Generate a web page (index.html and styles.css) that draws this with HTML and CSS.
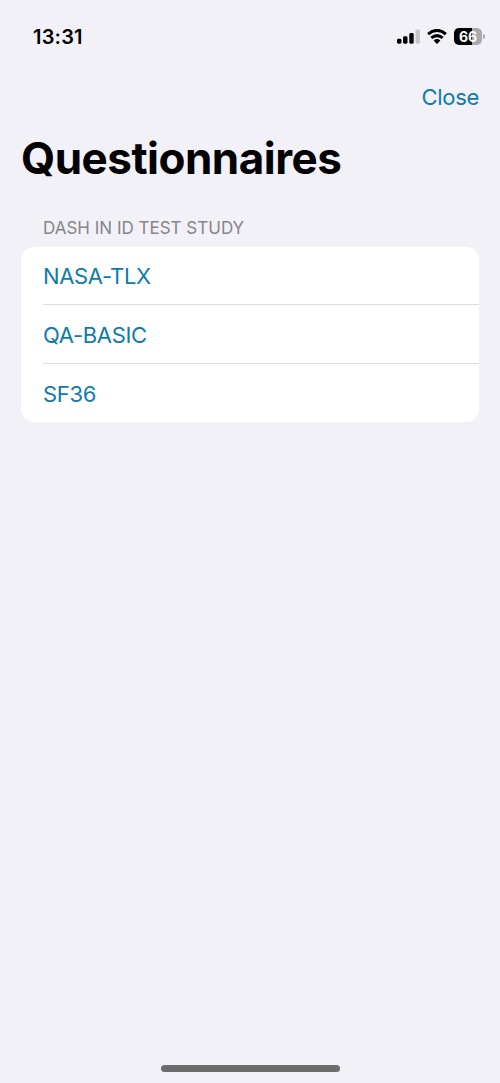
FILE: index.html
```html
<!DOCTYPE html>
<html lang="en">
<head>
<meta charset="utf-8">
<title>Questionnaires</title>
<link rel="stylesheet" href="styles.css">
</head>
<body>
<div class="screen">
  <header class="status">
    <span class="time">13:31</span>
    <div class="indicators">
      <svg class="signal" width="24" height="15" viewBox="0 0 24 15">
        <rect x="0" y="9.8" width="4.4" height="4.9" rx="1.4"/>
        <rect x="6.1" y="7.3" width="4.4" height="7.4" rx="1.4"/>
        <rect x="12.3" y="4" width="4.4" height="10.7" rx="1.4"/>
        <rect class="dim" x="18.5" y="0.4" width="4.4" height="14.3" rx="1.4"/>
      </svg>
      <svg class="wifi" width="20" height="15" viewBox="0 0 20 15">
        <path d="M1.1 5.2Q10-2.4 18.9 5.2M4.3 8.9Q10 4.3 15.7 8.9"/>
        <path class="dot" d="M6.6 11.5Q10 8.7 13.4 11.5L10.6 14.4Q10 14.9 9.4 14.4Z"/>
      </svg>
      <div class="battery"><span class="level">66</span><span class="cap"></span></div>
    </div>
  </header>
  <nav class="nav"><a class="close">Close</a></nav>
  <h1 class="title">Questionnaires</h1>
  <h2 class="section">DASH IN ID TEST STUDY</h2>
  <ul class="list">
    <li class="row"><span class="nasa">NASA-TLX</span></li>
    <li class="row"><span class="basic">QA-BASIC</span></li>
    <li class="row"><span class="sf">SF36</span></li>
  </ul>
  <div class="home"></div>
</div>
</body>
</html>
```
FILE: styles.css
```css
* { box-sizing: border-box; }
body { margin: 0; background: #f2f1f7; font-family: Inter, "Liberation Sans", sans-serif; }
.screen { display: flex; flex-direction: column; height: 1083px; }
.status { display: flex; justify-content: space-between; height: 72px; padding: 24px 15px 0 33px; }
.time { font-size: 20px; line-height: 26px; font-weight: 600; letter-spacing: 0.2px; }
.indicators { display: flex; align-items: flex-start; padding-top: 4px; }
.signal { margin: 1px 6px 0 0; }
.dim { fill: #c5c5ca; }
.wifi { margin: 1px 7px 0 0; fill: none; stroke: #000; stroke-width: 3; }
.wifi .dot { fill: #000; stroke: none; }
.battery { display: flex; align-items: center; gap: 1px; }
.level { width: 28px; height: 17px; border-radius: 5px; background: linear-gradient(90deg, #000 0 66%, #aaaaae 66%); color: #fff; font-size: 14px; line-height: 17px; font-weight: 700; text-align: center; }
.cap { width: 2px; height: 5px; border-radius: 0 2px 2px 0; background: #aaaaae; }
.nav { display: flex; justify-content: flex-end; height: 58px; padding: 10px 21px 0 0; }
.close { font-size: 22px; line-height: 30px; color: #117ba8; letter-spacing: -0.3px; }
.title { margin: 0; padding-left: 21px; font-size: 44px; line-height: 56px; font-weight: 700; letter-spacing: -0.5px; color: #000; }
.section { margin: 31px 0 8px 43px; font-size: 17px; line-height: 22px; font-weight: 400; color: #85858a; letter-spacing: 0; }
.list { list-style: none; margin: 0 21px; padding: 0; background: #fff; border-radius: 13px; height: 175px; }
.row { display: flex; align-items: center; margin-left: 22px; height: 59px; padding-top: 1px; border-bottom: 1px solid #dedee0; font-size: 22px; color: #117ba8; letter-spacing: -0.3px; }
.row:first-child { height: 58px; }
.row:last-child { height: 58px; border-bottom: 0; }
.nasa { letter-spacing: -0.35px; }
.home { width: 179px; height: 7px; margin: auto auto 11px 161px; border-radius: 4px; background: #6b6c6b; }
```
